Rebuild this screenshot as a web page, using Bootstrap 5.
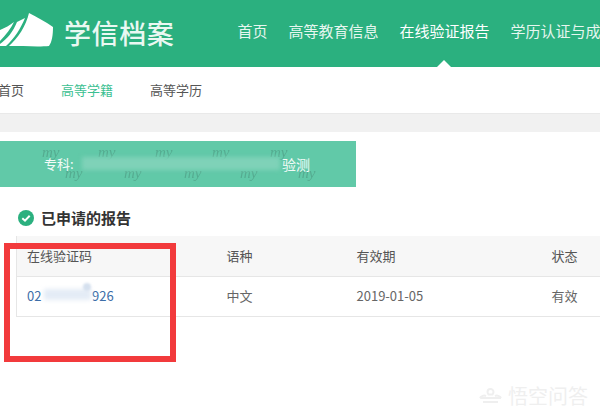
<!DOCTYPE html>
<html lang="zh">
<head>
<meta charset="utf-8">
<link href="https://cdn.jsdelivr.net/npm/bootstrap@5.3.0/dist/css/bootstrap.min.css" rel="stylesheet">
<style>
html,body{height:418px;overflow:hidden}
body{font-family:"Noto Sans CJK SC","Liberation Sans",sans-serif;background:#fff;color:#555;font-size:13px;position:relative}
.topbar{height:67px;background:#2bb07f;color:#e6f6ef;flex-wrap:nowrap;overflow:hidden}
.logo-mark{width:54px;height:34px;flex:none;margin-bottom:7px}
.brand-name{font-size:27px;line-height:34px;color:#eaf8f2;letter-spacing:.6px;margin-left:10px;margin-bottom:2px;width:112px;white-space:nowrap;font-weight:500}
.top-links{margin-left:63px;gap:21px;white-space:nowrap;font-size:15px;line-height:20px;margin-bottom:5px}
.top-links span{flex:none}
.top-links .now{color:#fff;position:relative}
.now::after{content:"";position:absolute;left:50%;margin-left:-8px;top:39px;border:8px solid transparent;border-top:0;border-bottom-color:#fff}
.subnav{height:46px;gap:37px;font-size:13px;color:#555;white-space:nowrap}
.subnav .first{margin-left:-2px}
.subnav .on{color:#3cbf92}
.band{height:19px;background:#f1f1f1;border-top:1px solid #e9e9e9}
.banner{width:356px;height:46px;margin-top:9px;background:#61c9a8;position:relative;overflow:hidden}
.banner-text{position:absolute;left:44px;top:14px;color:#f3fbf8;font-size:13px;line-height:18px;white-space:nowrap}
.blur-strip{position:absolute;left:82px;top:16px;width:198px;height:13px;background:#7fd2b8;filter:blur(2px)}
.banner-end{position:absolute;left:282px;top:14px;color:#f3fbf8;font-size:14px;line-height:18px}
.scrawl{position:absolute;top:4px;font-family:"Liberation Serif",serif;font-style:italic;font-size:15px;color:#4f9f86;line-height:1;opacity:.7}
.scrawl-low{top:25px}
.report-title{margin:21px 0 8px 18px;height:20px;font-size:15px;font-weight:700;color:#333;line-height:20px;gap:7px}
.tick{width:16px;height:16px;flex:none}
.report-table{margin:0 0 0 16px;width:584px;table-layout:fixed;--bs-table-border-color:#e6e6e6;font-size:13px;color:#666}
.report-table th,.report-table td{height:40px;padding:0 0 0 10px;vertical-align:middle;font-weight:400;color:#666;white-space:nowrap}
.report-table th{background:#f7f7f7;color:#555}
.report-table tr>*:first-child{border-left:1px solid #e6e6e6;width:200px}
.code-link{color:#3d6ea8;text-decoration:none;position:relative}
.smear{position:absolute;left:17px;top:3px;width:47px;height:11px;background:#e4ecf6;filter:blur(2px)}
.smear-dot{position:absolute;left:56px;top:-3px;width:8px;height:8px;border-radius:50%;background:#d5e0ee;filter:blur(1px)}
.red-frame{position:absolute;left:4px;top:243px;width:172px;height:119px;border:6px solid #f23a3c;pointer-events:none}
.mark-wm{position:absolute;left:478px;top:385px;font-size:20px;line-height:22px;color:#efefef;gap:5px}
.cloud{width:25px;height:17px;flex:none}
</style>
</head>
<body>
<nav class="topbar d-flex align-items-center">
<svg class="logo-mark" viewBox="0 0 54 34"><path d="M29 0 C37 4 46 9 53 14 C53 22 52 29 49 33 C40 34 22 33 9 33 C18 25 26 13 29 0Z" fill="#fff"/><path d="M25 5 C21 15 14 26 6 33 L0 33 L0 31 C7 26 13 19 17 9Z" fill="#fff"/><path d="M14 9 C11 15 6 22 0 28 L0 17 C5 15 10 12 14 9Z" fill="#fff"/></svg>
<span class="brand-name">学信档案</span>
<div class="top-links d-flex">
<span>首页</span><span>高等教育信息</span><span class="now">在线验证报告</span><span>学历认证与成绩认证</span>
</div>
</nav>
<div class="subnav d-flex align-items-center">
<span class="first">首页</span><span class="on">高等学籍</span><span>高等学历</span>
</div>
<div class="band"></div>
<div class="banner">
<span class="scrawl" style="left:42px">my</span><span class="scrawl" style="left:98px">my</span><span class="scrawl" style="left:155px">my</span><span class="scrawl" style="left:212px">my</span><span class="scrawl" style="left:270px">my</span>
<span class="scrawl scrawl-low" style="left:65px">my</span><span class="scrawl scrawl-low" style="left:124px">my</span><span class="scrawl scrawl-low" style="left:184px">my</span><span class="scrawl scrawl-low" style="left:240px">my</span><span class="scrawl scrawl-low" style="left:298px">my</span>
<span class="banner-text">专科:</span><div class="blur-strip"></div><span class="banner-end">验测</span>
</div>
<div class="report-title d-flex align-items-center">
<svg class="tick" viewBox="0 0 16 16"><circle cx="8" cy="8" r="8" fill="#2bb07f"/><path d="M4.300 8.200 7 10.700 11.700 5.800" fill="none" stroke="#fff" stroke-width="2"/></svg>
<span>已申请的报告</span>
</div>
<table class="table report-table mb-0">
<thead><tr><th>在线验证码</th><th style="width:130px">语种</th><th style="width:195px">有效期</th><th>状态</th></tr></thead>
<tbody><tr><td><a class="code-link" href="#">02<span class="invisible">0000000</span>926<span class="smear"></span><span class="smear-dot"></span></a></td><td>中文</td><td>2019-01-05</td><td>有效</td></tr></tbody>
</table>
<div class="red-frame"></div>
<div class="mark-wm d-flex align-items-center">
<svg class="cloud" viewBox="0 0 25 17"><path d="M12.500 1a3 3 0 0 1 3 3c0 1-.5 1.800-1 2.500h-4c-.5-.7-1-1.500-1-2.500a3 3 0 0 1 3-3ZM2 10h21M5 14h15M2 10c1-2 4-3 6-2M23 10c-1-2-4-3-6-2" fill="none" stroke="#efefef" stroke-width="2"/></svg>
<span>悟空问答</span></div>
</body>
</html>
